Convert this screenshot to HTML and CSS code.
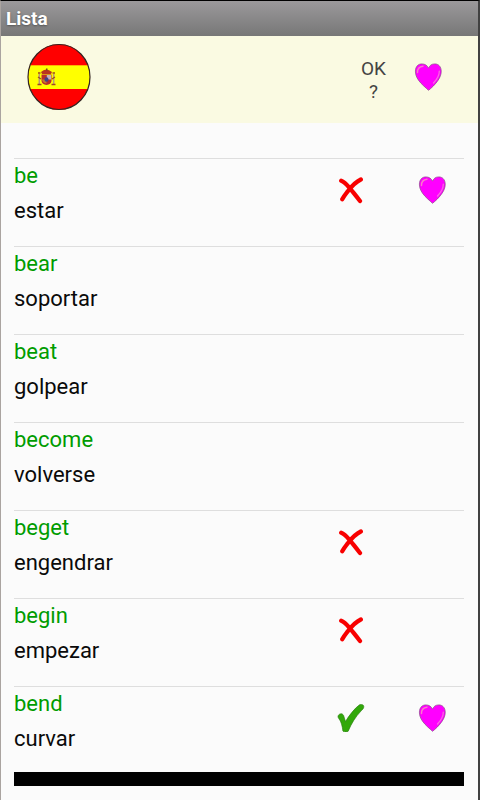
FILE: index.html
```html
<!DOCTYPE html>
<html lang="es">
<head>
<meta charset="UTF-8">
<meta name="viewport" content="width=device-width, initial-scale=1">
<title>Lista</title>
<link rel="stylesheet" href="styles.css">
</head>
<body>
    <svg class="sprite" aria-hidden="true">
        <symbol id="heart" viewBox="0 0 28 28">
            <path d="M14.500 27.300C12 24.800 7.500 21.500 4.500 17.200C2.300 14 1.300 11 1.400 8C1.600 3.500 4.100 .9 7.800 .9C11 .9 13.300 2.300 14.500 5.200C15.700 2.300 17.700 .9 20.800 .9C24.600 .9 27.100 3.600 27.200 8C27.300 11.300 26.200 14.200 24 17.400C21.200 21.500 17.300 25.200 14.500 27.300Z" fill="#f0f" stroke="#8a4a88" stroke-width=".7"/>
            <path d="M3.500 9.500C3.400 6 5.500 3.600 9 3.200" fill="none" stroke="#f87cc8" stroke-width="1.400" stroke-linecap="round"/>
            <path d="M25.300 8C25.400 12 22.800 16.500 19.500 20" fill="none" stroke="#fa6de0" stroke-width="1.200" stroke-linecap="round"/>
        </symbol>
        <symbol id="cross" viewBox="0 0 28 28">
            <path d="M4.200 4.700C8 6 10.500 9.500 13.500 13C16.500 16.800 19.500 20.500 23 25M23.800 3.500C18.500 6 14.500 10.500 11 15C8.500 18.200 6.500 20.500 5.300 23.200" fill="none" stroke="#f80000" stroke-width="4.300" stroke-linecap="round"/>
        </symbol>
        <symbol id="check" viewBox="0 0 28 28">
            <path d="M1.200 11.700C2.500 9.200 5.400 9 6.600 11.500L8.500 17.500C12 11.500 17.500 4.500 22.500 .8C24.700-.3 27.400 1 26.700 3.400C26.500 4.800 25 5.900 24 7C18.800 12.500 14.500 19.200 11.200 27.200C10 28.200 6.800 28.200 5.900 27C5.200 22 4.300 17.500 1.700 14.400C1 13.500 .8 12.500 1.200 11.700Z" fill="#32a80a" stroke="#277a0d" stroke-width=".6"/>
        </symbol>
    </svg>

    <h1 class="title-bar">Lista</h1>

    <header class="legend">
        <svg class="flag" viewBox="0 0 64 68" role="img" aria-label="Español">
            <clipPath id="round"><ellipse cx="32" cy="34" rx="31" ry="33"/></clipPath>
            <g clip-path="url(#round)">
                <rect width="64" height="68" fill="#f00"/>
                <rect y="22.300" width="64" height="23.700" fill="#ff0"/>
            </g>
            <!-- coat of arms -->
            <path d="M14 29Q19 24 25 29L24 31H15Z" fill="#b93420"/>
            <path d="M19 25.500h1.500v2H19z" fill="#705020"/>
            <path d="M14.500 31.500H24.500V38Q24 41.500 19.500 42Q15 41.500 14.500 38Z" fill="#b82d2b"/>
            <path d="M19.800 32H24V36.500H19.800z" fill="#c3b1bd"/>
            <path d="M15 36.500h4.500v4q-4-.5-4.500-4z" fill="#c5782d"/>
            <ellipse cx="19.500" cy="36.500" rx="2" ry="2.300" fill="#3e3f89"/>
            <path d="M12.300 31V41M26.700 31V41" stroke="#b59a79" stroke-width="1.500"/>
            <path d="M11 30h2.500M25.500 30H28M11 34l3 2M25 36l3-2M10.500 41.500h4M24.500 41.500h4" stroke="#a04525" stroke-width="1.300"/>
            <ellipse cx="32" cy="34" rx="31" ry="32.500" fill="none" stroke="#352522" stroke-width="1.200"/>
        </svg>
        <span class="legend-ok">OK<br>?</span>
        <svg class="icon" role="img" aria-label="Favoritos"><use href="#heart"/></svg>
    </header>

    <main class="list">
        <ul class="words">
            <li class="word">
                <p class="text"><span class="en" lang="en">be</span><span class="es">estar</span></p>
                <svg class="icon mark"><use href="#cross"/></svg>
                <svg class="icon fav"><use href="#heart"/></svg>
            </li>
            <li class="word">
                <p class="text"><span class="en" lang="en">bear</span><span class="es">soportar</span></p>
            </li>
            <li class="word">
                <p class="text"><span class="en" lang="en">beat</span><span class="es">golpear</span></p>
            </li>
            <li class="word">
                <p class="text"><span class="en" lang="en">become</span><span class="es">volverse</span></p>
            </li>
            <li class="word">
                <p class="text"><span class="en" lang="en">beget</span><span class="es">engendrar</span></p>
                <svg class="icon mark"><use href="#cross"/></svg>
            </li>
            <li class="word">
                <p class="text"><span class="en" lang="en">begin</span><span class="es">empezar</span></p>
                <svg class="icon mark"><use href="#cross"/></svg>
            </li>
            <li class="word">
                <p class="text"><span class="en" lang="en">bend</span><span class="es">curvar</span></p>
                <svg class="icon mark"><use href="#check"/></svg>
                <svg class="icon fav"><use href="#heart"/></svg>
            </li>
        </ul>
        <div class="footer-bar"></div>
    </main>
</body>
</html>
```
FILE: styles.css
```css
* {
    box-sizing: border-box;
    margin: 0;
    padding: 0;
}
body {
    min-height: 100vh;
    border: solid;
    border-width: 1px 2px 0 1px;
    border-color: #000 #414141 #000 #aaa4a0;
    background: #fbfbfb;
    color: #0a0a0a;
    font-family: Roboto, "Liberation Sans", sans-serif;
}
.sprite {
    display: none;
}
.title-bar {
    height: 35px;
    padding-left: 5px;
    background: linear-gradient(#9b999b, #777);
    color: #fff;
    font-size: 19px;
    font-weight: 700;
    line-height: 35px;
    text-shadow: 0 1px 2px #555;
}
.legend {
    display: flex;
    align-items: center;
    height: 87px;
    padding: 0 36px 5px 26px;
    background: #fafae2;
}
.flag {
    width: 64px;
    height: 68px;
    margin-right: auto;
}
.legend-ok {
    margin: 5px 28px 0 0;
    color: #444;
    font-size: 19px;
    line-height: 23px;
    text-align: center;
}
.icon {
    display: block;
    width: 28px;
    height: 28px;
}
.list {
    padding: 35px 14px 14px 13px;
}
.words {
    list-style: none;
}
.word {
    display: grid;
    grid-template-columns: 1fr 28px 28px;
    column-gap: 53px;
    height: 88px;
    padding-right: 18px;
    border-top: 1px solid #dedede;
}
.word:last-child {
    height: 86px;
}
.text {
    margin-top: -1px;
    font-size: 22px;
    line-height: 35px;
}
.en,
.es {
    display: block;
}
.en {
    color: #009c00;
}
.mark,
.fav {
    margin-top: 17px;
}
.mark {
    grid-column: 2;
}
.fav {
    grid-column: 3;
}
.footer-bar {
    height: 14px;
    background: #000;
}
```
